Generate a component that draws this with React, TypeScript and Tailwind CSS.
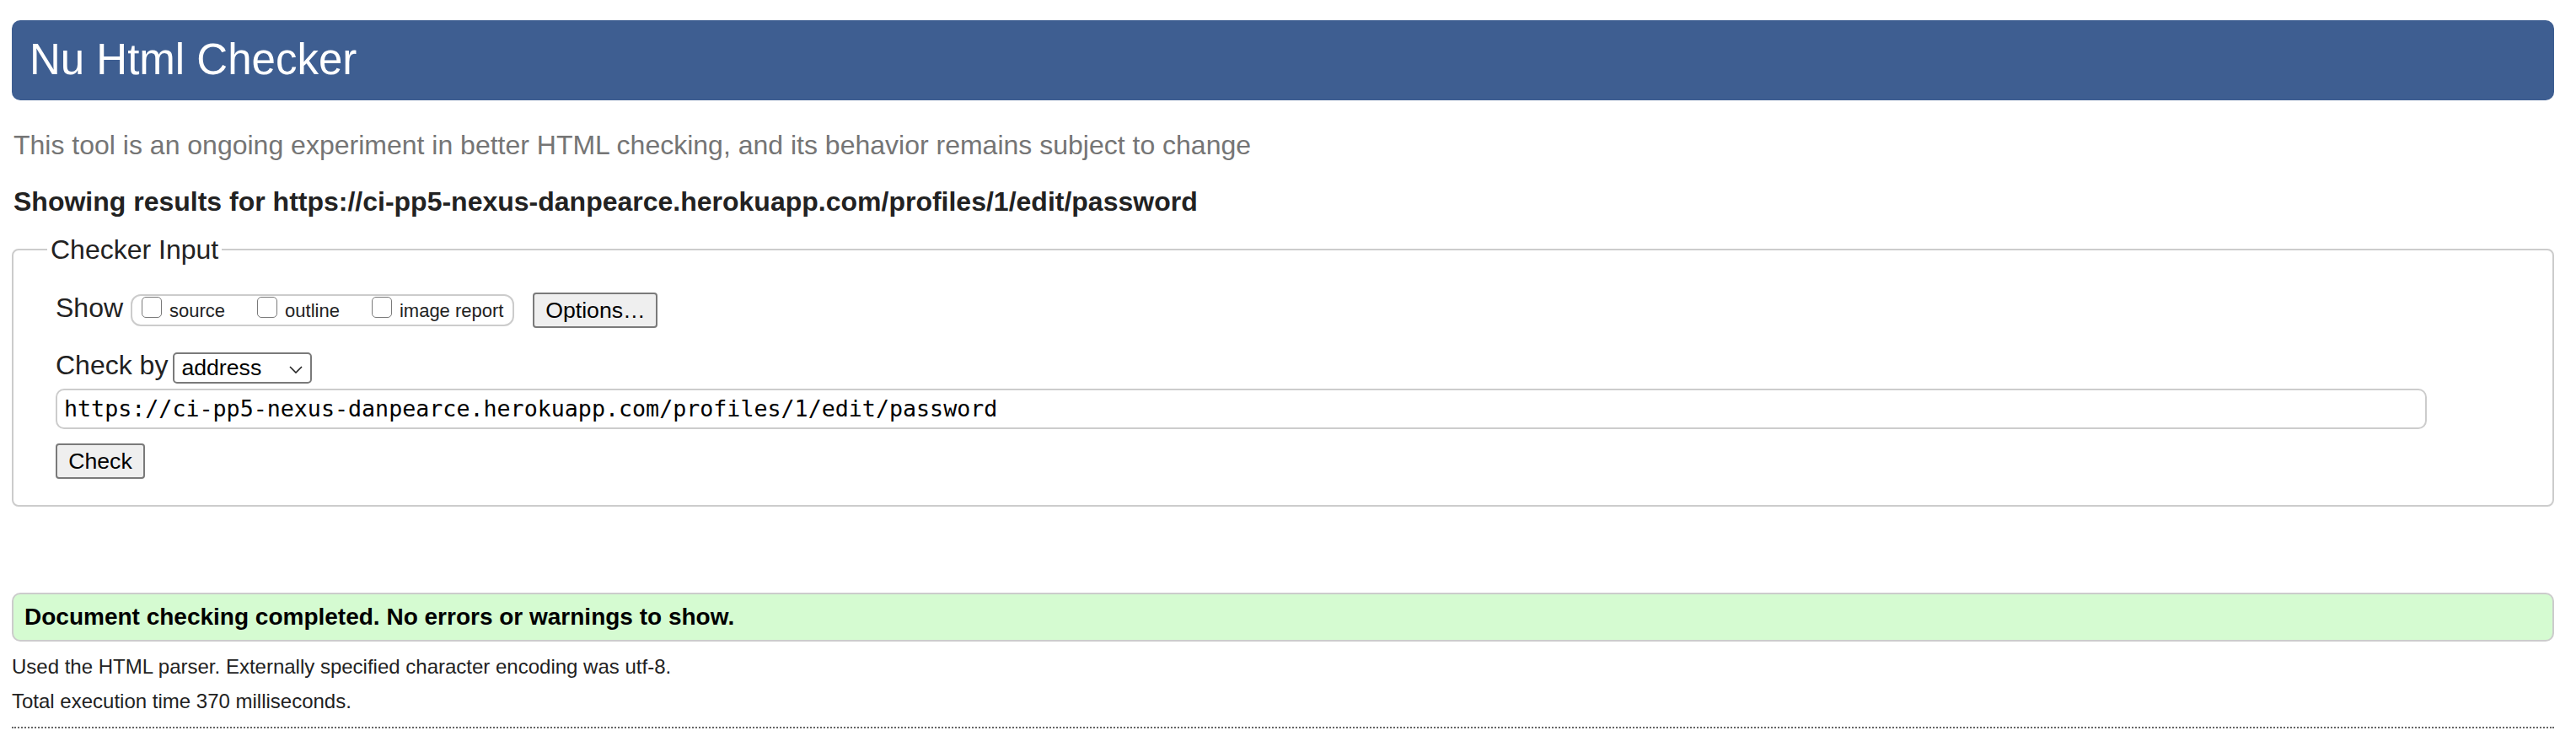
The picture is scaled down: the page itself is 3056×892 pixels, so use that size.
import React from "react";

const sans = "font-['Liberation_Sans',Arial,sans-serif]";

function Box({ label }: { label: string }) {
  return (
    <label className="flex items-start">
      <span className="mt-[1px] inline-block w-[24px] h-[25px] rounded-[5px] border-[1.5px] border-[#7a7a7a] bg-white" />
      <span className="ml-[9px] mt-[3px] text-[22px] leading-[30px] text-[#222]">{label}</span>
    </label>
  );
}

export default function App() {
  return (
    <div className={`${sans} w-[3056px] min-h-[892px] bg-white pl-[14px] pr-[26px] pt-[24px] text-[#222]`}>
      <header className="h-[95px] rounded-[10px] bg-[#3e5e91] flex items-center pl-[21px] pb-[2px]">
        <h1 className="text-[51px] leading-none font-normal text-white">Nu Html Checker</h1>
      </header>

      <p className="mt-[33px] ml-[2px] text-[32px] leading-[40px] text-[#757575]">
        This tool is an ongoing experiment in better HTML checking, and its behavior remains subject to change
      </p>

      <p className="mt-[27px] ml-[2px] text-[32px] leading-[40px] font-bold text-[#222]">
        Showing results for https://ci-pp5-nexus-danpearce.herokuapp.com/profiles/1/edit/password
      </p>

      <fieldset className="mt-[19px] border-2 border-[#cccccc] rounded-[8px]">
        <legend className="ml-[40px] px-[4px] text-[32px] leading-[36px] text-[#222]">Checker Input</legend>
        <div className="pl-[50px] pb-[31px]">
          <div className="mt-[33px] flex items-start h-[42px]">
            <span className="text-[32px] leading-[36px]">Show</span>
            <div className="ml-[9px] mt-[2px] h-[38px] flex items-start gap-[38px] rounded-[12px] border-2 border-[#cccccc] pl-[11px] pr-[11px]">
              <Box label="source" />
              <Box label="outline" />
              <Box label="image report" />
            </div>
            <button className="ml-[22px] h-[42px] w-[148px] rounded-[4px] border-2 border-[#7a7a7a] bg-[#efefef] text-[26.67px] leading-none text-black">
              Options…
            </button>
          </div>

          <div className="mt-[26px] flex items-start">
            <span className="text-[32px] leading-[37px]">Check by</span>
            <div className="ml-[6px] mt-[3px] h-[37px] w-[165px] rounded-[5px] border-2 border-[#7a7a7a] bg-white flex items-center justify-between pl-[8px] pr-[9px]">
              <span className="text-[26.67px] leading-none text-black">address</span>
              <svg width="16" height="9" viewBox="0 0 16 9" className="mt-[3px]">
                <polyline points="1,1 8,8 15,1" fill="none" stroke="#222" strokeWidth="1.6" />
              </svg>
            </div>
          </div>

          <div className="mt-[6px] mr-[149px] h-[48px] rounded-[10px] border-2 border-[#cccccc] bg-white flex items-center pl-[8px]">
            <span className="font-['DejaVu_Sans_Mono',monospace] text-[26.67px] leading-[44px] text-black">
              https://ci-pp5-nexus-danpearce.herokuapp.com/profiles/1/edit/password
            </span>
          </div>

          <button className="mt-[17px] h-[42px] w-[106px] rounded-[4px] border-2 border-[#7a7a7a] bg-[#efefef] text-[26.67px] leading-none text-black">
            Check
          </button>
        </div>
      </fieldset>

      <div className="mt-[102px] h-[58px] rounded-[10px] border-2 border-[#cccccc] bg-[#d5fbd1] flex items-center pl-[13px]">
        <p className="text-[28px] leading-[54px] font-bold text-black">
          Document checking completed. No errors or warnings to show.
        </p>
      </div>

      <p className="mt-[14px] text-[24px] leading-[32px] text-[#222]">
        Used the HTML parser. Externally specified character encoding was utf-8.
      </p>
      <p className="mt-[9px] text-[24px] leading-[32px] text-[#222]">Total execution time 370 milliseconds.</p>

      <div className="mt-[14px] border-t-2 border-dotted border-[#666666]" />
    </div>
  );
}
